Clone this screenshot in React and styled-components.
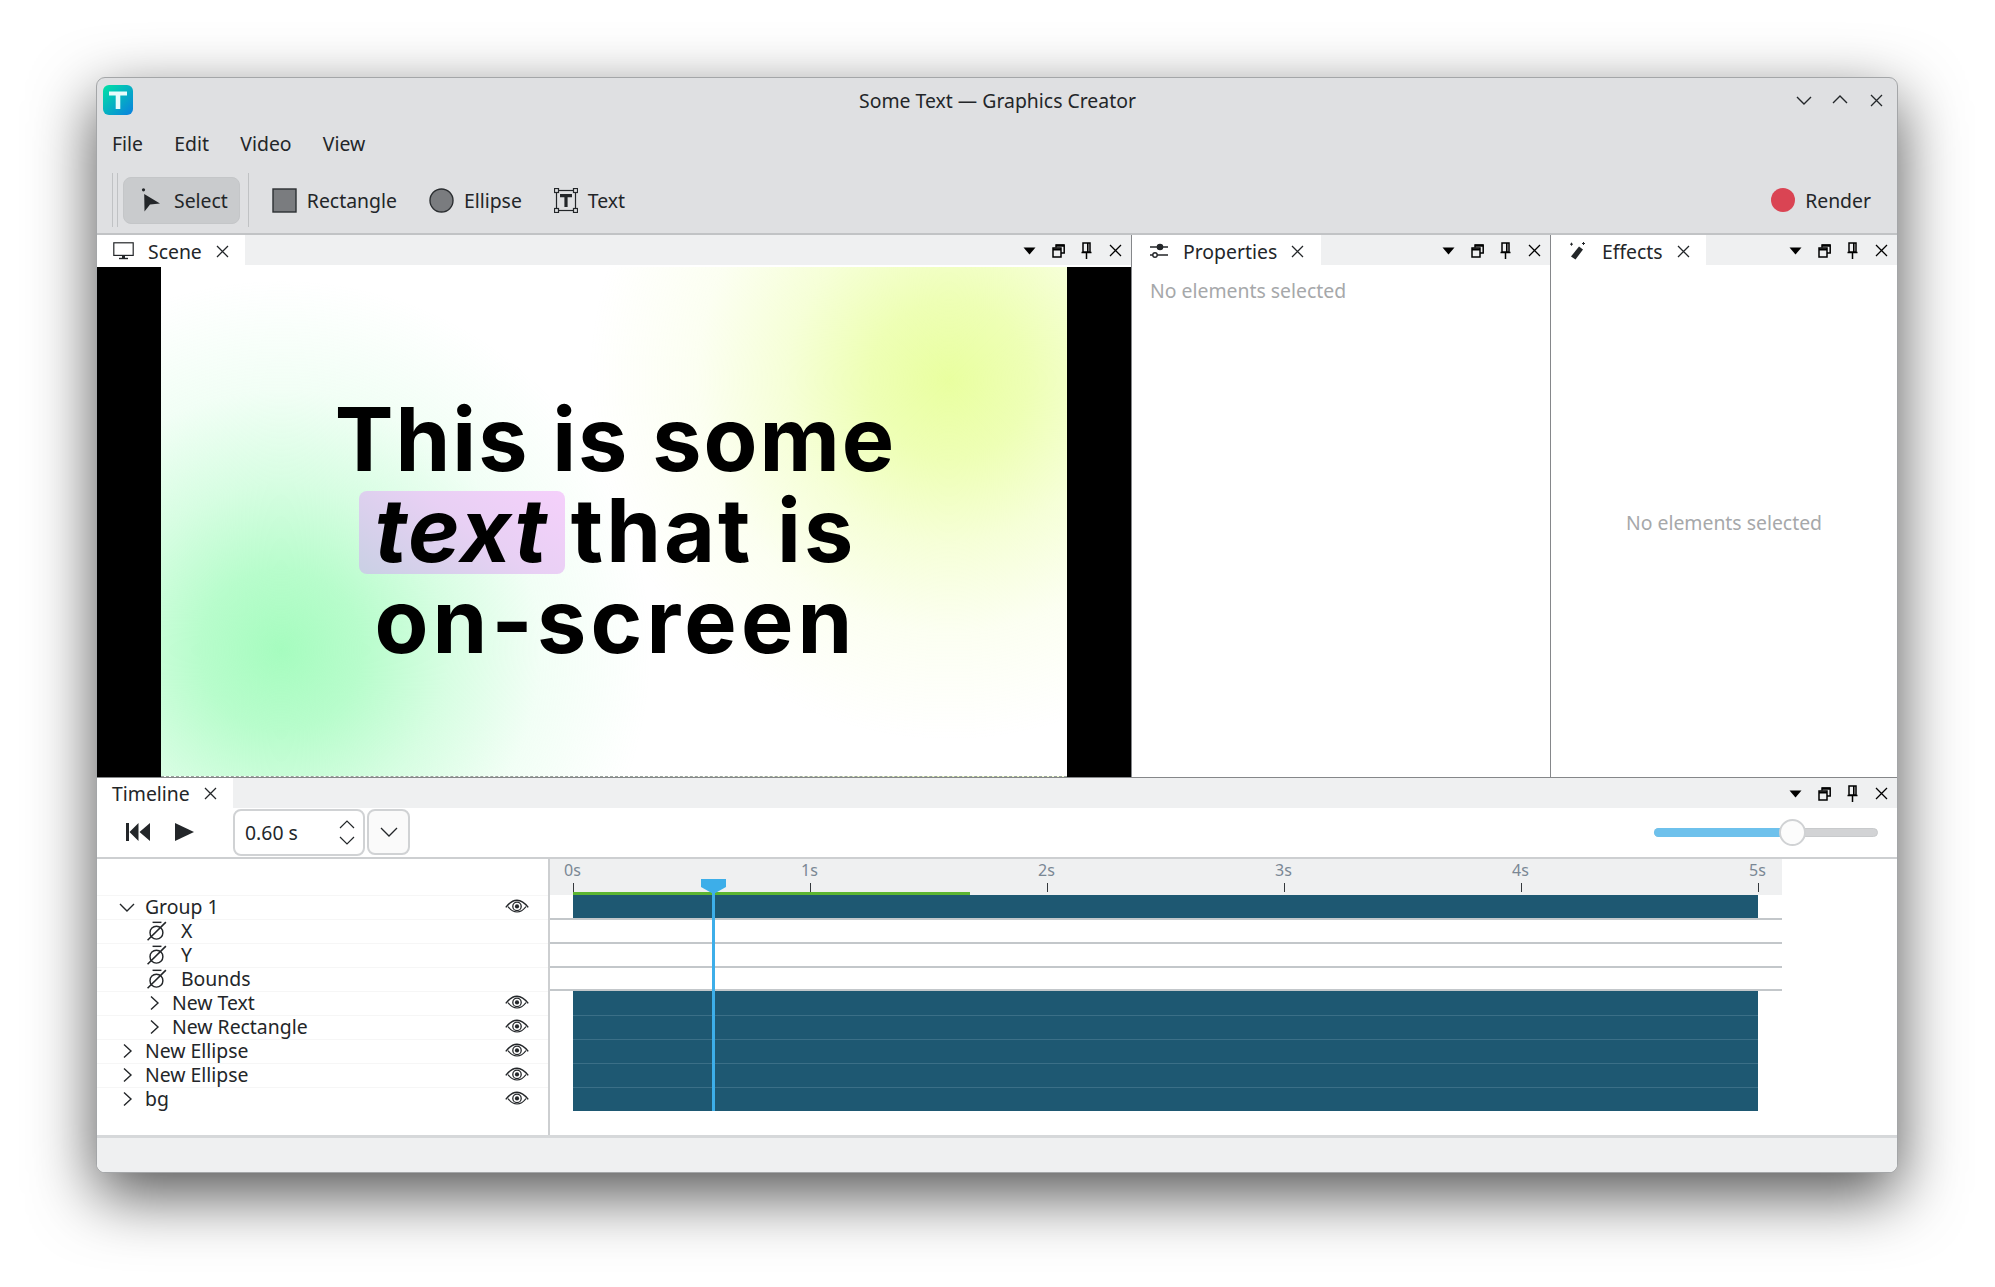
import React from "react";
import styled, { createGlobalStyle } from "styled-components";

const Global = createGlobalStyle`
  html, body { margin: 0; padding: 0; background: #fff; }
  body { width: 1995px; height: 1287px; overflow: hidden; font-family: "Noto Sans", sans-serif; color: #232629; }
  * { box-sizing: border-box; }
  svg { display: block; flex: none; }
`;

const Page = styled.div`
  padding: 77px 0 0 96px;
`;
const Win = styled.div`
  width: 1802px;
  height: 1096px;
  display: flex;
  flex-direction: column;
  border: 1px solid #a4a6a8;
  border-radius: 9px;
  overflow: hidden;
  background: #dfe0e2;
  box-shadow: 0 22px 64px rgba(0, 0, 0, 0.68);
`;
const TitleBar = styled.div`
  height: 44px;
  display: grid;
  grid-template-columns: 1fr auto 1fr;
  align-items: center;
  padding: 0 3px 0 6px;
  font-size: 19.4px;
`;
const TitleText = styled.span`
  padding: 1px 2px 0 0;
`;
const WinButtons = styled.div`
  display: flex;
  justify-content: flex-end;
`;
const WinButton = styled.div`
  width: 36px;
  height: 24px;
  display: flex;
  align-items: center;
  justify-content: center;
`;
const MenuBar = styled.div`
  height: 44px;
  display: flex;
  align-items: center;
  padding: 0 0 1px 15px;
  font-size: 19.4px;
  gap: 31.3px;
`;
const ToolBar = styled.div`
  height: 69px;
  display: flex;
  align-items: flex-start;
  padding: 7px 26px 0 15px;
  border-bottom: 2px solid #c1c3c5;
  font-size: 19.4px;
`;
const Handle = styled.div`
  width: 6px;
  height: 54px;
  border-left: 1px solid #c0c2c4;
  border-right: 1px solid #c0c2c4;
  margin-right: 5px;
`;
const Separator = styled.div`
  width: 1px;
  height: 54px;
  background: #c0c2c4;
  margin: 0 23px 0 8px;
`;
const SelectButton = styled.div`
  height: 47px;
  margin-top: 4px;
  display: flex;
  align-items: center;
  gap: 11px;
  padding: 0 11px 0 17px;
  background: #c9cbcd;
  border: 1px solid #c4c6c8;
  border-radius: 8px;
`;
const Tool = styled.div`
  height: 54px;
  display: flex;
  align-items: center;
  gap: 10px;
  margin-right: 32px;
  &:last-child { margin-right: 0; }
`;
const Spacer = styled.div`
  flex: 1;
`;
const Docks = styled.div`
  height: 543px;
  display: flex;
  background: #fff;
  border-bottom: 1px solid #858789;
`;
const Dock = styled.div`
  width: ${(p) => p.$width}px;
  display: flex;
  flex-direction: column;
  border-right: ${(p) => (p.$last ? "none" : "1px solid #85878a")};
`;
const TabBar = styled.div`
  height: 30px;
  flex: none;
  display: flex;
  background: #eff0f1;
`;
const Tab = styled.div`
  width: ${(p) => p.$width}px;
  display: flex;
  align-items: center;
  padding: ${(p) => p.$top ?? 2}px 0 0 ${(p) => p.$pad}px;
  background: #fff;
  font-size: 19.4px;
`;
const TabIcon = styled.div`
  width: ${(p) => p.$width}px;
`;
const TabClose = styled.div`
  margin-left: ${(p) => p.$gap}px;
`;
const DockTools = styled.div`
  margin-left: auto;
  display: flex;
  padding: 1px 1.5px 0 0;
`;
const DockTool = styled.div`
  width: 28.5px;
  display: flex;
  align-items: center;
  justify-content: center;
`;
const SceneBody = styled.div`
  margin-top: 2px;
  flex: 1;
  background: #000;
  display: flex;
  justify-content: center;
  padding-right: 1px;
`;
const Video = styled.div`
  width: 906px;
  height: 510px;
  background:
    radial-gradient(circle 360px at 788px 113px, #e9ffa0 0%, rgba(233, 255, 160, 0.78) 22%, rgba(233, 255, 160, 0.42) 45%, rgba(233, 255, 160, 0.14) 70%, rgba(233, 255, 160, 0) 100%),
    radial-gradient(circle 370px at 120px 383px, #a6fcbf 0%, rgba(166, 252, 191, 0.8) 22%, rgba(166, 252, 191, 0.45) 45%, rgba(166, 252, 191, 0.15) 70%, rgba(166, 252, 191, 0) 100%),
    #fff;
  border-bottom: 1px dashed #9aa39c;
  display: flex;
  flex-direction: column;
  align-items: center;
  padding: 127px 0 0 4px;
  font-family: Inter, sans-serif;
  font-weight: 700;
  font-size: 88px;
  line-height: 91px;
  color: #000;
`;
const HeroLine = styled.div`
  display: flex;
  align-items: center;
  height: 91px;
  white-space: pre;
  padding-right: ${(p) => p.$shift || 0}px;
  letter-spacing: ${(p) => p.$tracking}px;
`;
const Highlight = styled.span`
  width: 206px;
  height: 83px;
  margin: 4px 6px 0 0;
  padding-bottom: 4px;
  display: flex;
  align-items: center;
  justify-content: center;
  border-radius: 8px;
  font-style: italic;
  letter-spacing: 2px;
  background: linear-gradient(35deg, #c9d0e4 0%, #e8d0f4 55%, #f5d0fb 100%);
`;
const Empty = styled.div`
  color: #a6a8aa;
  font-size: 19.4px;
`;
const PropsBody = styled.div`
  padding: 12px 0 0 18px;
`;
const EffectsBody = styled.div`
  flex: 1;
  display: flex;
  justify-content: center;
  padding: 244px 0 0 0;
`;
const Timeline = styled.div`
  flex: 1;
  min-height: 0;
  display: flex;
  flex-direction: column;
  background: #fff;
`;
const Controls = styled.div`
  height: 51px;
  flex: none;
  display: flex;
  align-items: center;
  padding: 0 19px 1px 29px;
  border-bottom: 2px solid #cdcfd1;
`;
const Rewind = styled.div`
  margin-right: 25px;
`;
const Play = styled.div`
  margin-right: 39px;
`;
const Spin = styled.div`
  width: 132px;
  height: 47px;
  display: flex;
  align-items: center;
  justify-content: space-between;
  padding: 0 8px 0 10px;
  border: 2px solid #d0d2d4;
  border-radius: 8px;
  font-size: 19.4px;
`;
const SpinArrows = styled.div`
  display: flex;
  flex-direction: column;
  gap: 7px;
`;
const ComboButton = styled.div`
  width: 43px;
  height: 46px;
  margin-left: 2px;
  display: flex;
  align-items: center;
  justify-content: center;
  background: #fafafa;
  border: 2px solid #d0d2d4;
  border-radius: 8px;
`;
const Slider = styled.div`
  position: relative;
  margin-left: auto;
  width: 224px;
  height: 9px;
  background: #d2d3d5;
  border: 1px solid #c8cacc;
  border-radius: 5px;
`;
const SliderFill = styled.div`
  height: 9px;
  margin: -1px 0 0 -1px;
  background: #6ec1ec;
  border-radius: 5px 0 0 5px;
`;
const Thumb = styled.div`
  position: absolute;
  top: -10px;
  width: 27px;
  height: 27px;
  margin-left: -13px;
  background: #fcfcfc;
  border: 2px solid #d0d2d4;
  border-radius: 50%;
`;
const Split = styled.div`
  flex: 1;
  display: flex;
  min-height: 0;
`;
const Tree = styled.div`
  width: 451px;
  padding-top: 36px;
`;
const Row = styled.div`
  height: 24px;
  display: flex;
  align-items: center;
  padding: 0 19px 2px ${(p) => p.$pad}px;
  border-top: 1px solid #f6f6f6;
  font-size: 19.4px;
  line-height: 22px;
`;
const Slot = styled.div`
  width: 37px;
  display: flex;
  justify-content: center;
`;
const PropLabel = styled.span`
  margin-left: 6px;
`;
const Eye = styled.div`
  margin-left: auto;
`;
const Tracks = styled.div`
  position: relative;
  flex: 1;
  border-left: 2px solid #cdcfd1;
`;
const Ruler = styled.div`
  width: 1232px;
  height: 36px;
  display: flex;
  flex-direction: column;
  justify-content: flex-end;
  background: #eff0f1;
`;
const Ticks = styled.div`
  display: flex;
  gap: 236px;
  padding-left: 23px;
`;
const Tick = styled.div`
  width: 1px;
  display: flex;
  flex-direction: column;
  align-items: center;
`;
const TickLabel = styled.div`
  font-size: 16px;
  line-height: 20px;
  margin-left: -2px;
  color: #7a8794;
  white-space: nowrap;
`;
const TickMark = styled.div`
  width: 1px;
  height: 9px;
  margin-top: 3px;
  background: #33383c;
`;
const Cached = styled.div`
  width: 397px;
  height: 3px;
  margin-left: 23px;
  background: #5cb531;
`;
const Track = styled.div`
  width: 1232px;
  height: ${(p) => p.$height}px;
  padding-left: 23px;
  border-bottom: ${(p) => (p.$line ? "2px solid #c3c7ca" : "none")};
`;
const Bar = styled.div`
  width: 1185px;
  height: 100%;
  background: #1e5872;
  border-top: ${(p) => (p.$seam ? "1px solid #3b6f87" : "none")};
`;
const PlayHead = styled.div`
  position: absolute;
  left: 151px;
  top: 20px;
  width: 25px;
  height: 232px;
  display: flex;
  flex-direction: column;
  align-items: center;
`;
const PlayLine = styled.div`
  width: 3px;
  flex: 1;
  margin-top: -1px;
  background: #3daee9;
`;
const StatusBar = styled.div`
  height: 37px;
  flex: none;
  border-top: 3px solid #d6d8da;
  background: #eff0f1;
`;

const ink = "#232629";
const Chevron = ({ dir = "right", s = 18 }) => {
  const d = { right: "M6 2.5l7 6.5-7 6.5", down: "M2 6l7 7 7-7", up: "M2 12l7-7 7 7" }[dir];
  return (
    <svg width={s} height={s} viewBox="0 0 18 18" fill="none" stroke={ink} strokeWidth="1.4">
      <path d={d} />
    </svg>
  );
};
const Cross = ({ s = 13, c = ink }) => (
  <svg width={s} height={s} viewBox="0 0 13 13" fill="none" stroke={c} strokeWidth="1.3">
    <path d="M1 1l11 11M12 1L1 12" />
  </svg>
);
const AppIcon = () => (
  <svg width="30" height="30" viewBox="0 0 30 30">
    <defs>
      <linearGradient id="appg" x1="0" y1="0" x2="1" y2="1">
        <stop offset="0" stopColor="#00e3a4" />
        <stop offset="1" stopColor="#0a7fe0" />
      </linearGradient>
    </defs>
    <rect width="30" height="30" rx="6" fill="url(#appg)" />
    <path d="M6 6.5h18v4h-6.7V24h-4.6V10.5H6z" fill="#e8fbfb" />
  </svg>
);
const SelectIcon = () => (
  <svg width="22" height="26" viewBox="0 0 22 26" fill={ink}>
    <circle cx="2.5" cy="1.8" r="1.6" />
    <path d="M3.2 6L19 15.5l-10 1-5.5 7z" />
  </svg>
);
const RectIcon = () => (
  <svg width="25" height="25" viewBox="0 0 25 25">
    <rect x="1" y="1" width="23" height="23" fill="#7a7c7f" stroke="#2c2f32" strokeWidth="1.4" />
  </svg>
);
const EllipseIcon = () => (
  <svg width="25" height="25" viewBox="0 0 25 25">
    <circle cx="12.5" cy="12.5" r="11.5" fill="#7a7c7f" stroke="#2c2f32" strokeWidth="1.4" />
  </svg>
);
const TextIcon = () => (
  <svg width="24" height="25" viewBox="0 0 24 25">
    <rect x="2.5" y="2.5" width="19" height="20" fill="none" stroke={ink} strokeWidth="1.2" />
    {[[2.5, 2.5], [21.5, 2.5], [2.5, 22.5], [21.5, 22.5]].map(([x, y]) => (
      <rect key={`${x}${y}`} x={x - 2} y={y - 2} width="4" height="4" fill="#dfe0e2" stroke={ink} strokeWidth="1.2" />
    ))}
    <path d="M6 6h12v3.2h-4.4V19h-3.2V9.2H6z" fill={ink} />
  </svg>
);
const MonitorIcon = () => (
  <svg width="21" height="18" viewBox="0 0 21 18" fill="none" stroke={ink} strokeWidth="1.2">
    <rect x="0.8" y="0.8" width="19.4" height="12.6" />
    <path d="M6 16.5h9" strokeWidth="1.4" />
    <path d="M9 14h3v2H9z" fill={ink} stroke="none" />
  </svg>
);
const SlidersIcon = () => (
  <svg width="18" height="18" viewBox="0 0 18 18" fill="none" stroke={ink} strokeWidth="1.4">
    <path d="M0 5h18M0 13h3M7 13h11" />
    <circle cx="10" cy="5" r="2.6" fill={ink} />
    <circle cx="5" cy="13" r="2.2" fill="#fff" />
  </svg>
);
const WandIcon = () => (
  <svg width="18" height="20" viewBox="0 0 18 20" fill={ink}>
    <path d="M11 5.5l4 3-7.5 10-4.5-3z" />
    <path d="M2 3.2h3M3.5 1.7v3M15.5 1v3M14 2.5h3" stroke={ink} strokeWidth="1" fill="none" />
  </svg>
);
const MenuArrow = () => (
  <svg width="13" height="8" viewBox="0 0 13 8" fill="#000">
    <path d="M0.5 0.5h12L6.5 7.5z" />
  </svg>
);
const FloatIcon = () => (
  <svg width="13" height="14" viewBox="0 0 13 14" fill="none" stroke="#000" strokeWidth="1.5">
    <path d="M4 3.5V1h8.2v8H9" />
    <rect x="1" y="4" width="8" height="9" />
    <path d="M4 1.6h8M1 5.5h8" strokeWidth="2.2" />
  </svg>
);
const PinIcon = () => (
  <svg width="11" height="17" viewBox="0 0 11 17" fill="none" stroke="#000" strokeWidth="1.5">
    <path d="M2 1h7v9H2zM0.5 10.5h10M5.5 10.5V17" />
    <path d="M6.8 1v9" strokeWidth="1.6" />
  </svg>
);
const DockButtons = () => (
  <DockTools>
    <DockTool><MenuArrow /></DockTool>
    <DockTool><FloatIcon /></DockTool>
    <DockTool><PinIcon /></DockTool>
    <DockTool><Cross c="#000" /></DockTool>
  </DockTools>
);
const EyeIcon = () => (
  <svg width="24" height="16" viewBox="0 0 24 16" fill="none" stroke={ink}>
    <path d="M0.8 8.4C5 2.8 8.5 1.2 12 1.2s7 1.6 11.2 7.2" strokeWidth="1.5" />
    <path d="M3 7.6C6 11.5 9 13 12 13s6-1.5 9-5.4" strokeWidth="1.1" />
    <circle cx="12" cy="7.4" r="4.2" strokeWidth="1.3" />
    <circle cx="12" cy="7.4" r="2.1" fill={ink} stroke="none" />
  </svg>
);
const NoKeyIcon = () => (
  <svg width="20" height="20" viewBox="0 0 18 18" fill="none" stroke={ink} strokeWidth="1.3">
    <path d="M5 1.2h8" />
    <ellipse cx="8.5" cy="10.5" rx="5.8" ry="5.8" />
    <path d="M0.5 17.3L17 1" strokeWidth="1.4" />
  </svg>
);
const RewindIcon = () => (
  <svg width="24" height="18" viewBox="0 0 24 18" fill={ink}>
    <path d="M0 0h3v18H0zM12.5 0v18L3.5 9zM24 0v18l-10.5-9z" />
  </svg>
);
const PlayIcon = () => (
  <svg width="19" height="18" viewBox="0 0 19 18" fill={ink}>
    <path d="M0 0l19 9-19 9z" />
  </svg>
);
const HeadShape = () => (
  <svg width="25" height="15" viewBox="0 0 25 15" fill="#3daee9">
    <path d="M0 0h25v8l-12.5 7L0 8z" />
  </svg>
);

const items = [
  { kind: "group", pad: 11, open: true, label: "Group 1" },
  { kind: "prop", label: "X" },
  { kind: "prop", label: "Y" },
  { kind: "prop", label: "Bounds" },
  { kind: "group", pad: 38, label: "New Text" },
  { kind: "group", pad: 38, label: "New Rectangle" },
  { kind: "group", pad: 11, label: "New Ellipse" },
  { kind: "group", pad: 11, label: "New Ellipse" },
  { kind: "group", pad: 11, label: "bg" },
];

const tracks = [
  { height: 25, line: true, bar: true },
  { height: 24, line: true },
  { height: 24, line: true },
  { height: 23, line: true },
  { height: 24, bar: true },
  { height: 24, bar: true, seam: true },
  { height: 24, bar: true, seam: true },
  { height: 24, bar: true, seam: true },
  { height: 24, bar: true, seam: true },
];

export default function App() {
  return (
    <Page>
      <Global />
      <Win>
        <TitleBar>
          <AppIcon />
          <TitleText>Some Text — Graphics Creator</TitleText>
          <WinButtons>
            <WinButton><Chevron dir="down" /></WinButton>
            <WinButton><Chevron dir="up" /></WinButton>
            <WinButton><Cross c={ink} /></WinButton>
          </WinButtons>
        </TitleBar>
        <MenuBar>
          <span>File</span>
          <span>Edit</span>
          <span>Video</span>
          <span>View</span>
        </MenuBar>
        <ToolBar>
          <Handle />
          <SelectButton><SelectIcon />Select</SelectButton>
          <Separator />
          <Tool><RectIcon />Rectangle</Tool>
          <Tool><EllipseIcon />Ellipse</Tool>
          <Tool><TextIcon />Text</Tool>
          <Spacer />
          <Tool>
            <svg width="24" height="24" viewBox="0 0 24 24"><circle cx="12" cy="12" r="12" fill="#da4453" /></svg>
            Render
          </Tool>
        </ToolBar>
        <Docks>
          <Dock $width={1035}>
            <TabBar>
              <Tab $width={148} $pad={16}>
                <TabIcon $width={35}><MonitorIcon /></TabIcon>
                Scene
                <TabClose $gap={14}><Cross /></TabClose>
              </Tab>
              <DockButtons />
            </TabBar>
            <SceneBody>
              <Video>
                <HeroLine $tracking={2}>This is some</HeroLine>
                <HeroLine $shift={16} $tracking={3}><Highlight>text</Highlight>that is</HeroLine>
                <HeroLine $tracking={4.2}>on-screen</HeroLine>
              </Video>
            </SceneBody>
          </Dock>
          <Dock $width={419}>
            <TabBar>
              <Tab $width={189} $pad={18}>
                <TabIcon $width={33}><SlidersIcon /></TabIcon>
                Properties
                <TabClose $gap={14}><Cross /></TabClose>
              </Tab>
              <DockButtons />
            </TabBar>
            <PropsBody><Empty>No elements selected</Empty></PropsBody>
          </Dock>
          <Dock $width={346} $last>
            <TabBar>
              <Tab $width={155} $pad={17}>
                <TabIcon $width={34}><WandIcon /></TabIcon>
                Effects
                <TabClose $gap={14}><Cross /></TabClose>
              </Tab>
              <DockButtons />
            </TabBar>
            <EffectsBody><Empty>No elements selected</Empty></EffectsBody>
          </Dock>
        </Docks>
        <Timeline>
          <TabBar>
            <Tab $width={136} $pad={15} $top={0}>
              Timeline
              <TabClose $gap={14}><Cross /></TabClose>
            </Tab>
            <DockButtons />
          </TabBar>
          <Controls>
            <Rewind><RewindIcon /></Rewind>
            <Play><PlayIcon /></Play>
            <Spin>
              0.60 s
              <SpinArrows>
                <svg width="16" height="9" viewBox="0 0 16 9" fill="none" stroke={ink} strokeWidth="1.2"><path d="M1 8l7-7 7 7" /></svg>
                <svg width="16" height="9" viewBox="0 0 16 9" fill="none" stroke={ink} strokeWidth="1.2"><path d="M1 1l7 7 7-7" /></svg>
              </SpinArrows>
            </Spin>
            <ComboButton>
              <svg width="18" height="10" viewBox="0 0 18 10" fill="none" stroke={ink} strokeWidth="1.3"><path d="M1 1l8 8 8-8" /></svg>
            </ComboButton>
            <Slider>
              <SliderFill style={{ width: "61.6%" }} />
              <Thumb style={{ left: "61.6%" }} />
            </Slider>
          </Controls>
          <Split>
            <Tree>
              {items.map((it, i) =>
                it.kind === "prop" ? (
                  <Row key={i} $pad={41}>
                    <Slot><NoKeyIcon /></Slot>
                    <PropLabel>{it.label}</PropLabel>
                  </Row>
                ) : (
                  <Row key={i} $pad={it.pad}>
                    <Slot><Chevron dir={it.open ? "down" : "right"} /></Slot>
                    {it.label}
                    <Eye><EyeIcon /></Eye>
                  </Row>
                )
              )}
            </Tree>
            <Tracks>
              <Ruler>
                <Ticks>
                  {["0s", "1s", "2s", "3s", "4s", "5s"].map((t) => (
                    <Tick key={t}>
                      <TickLabel>{t}</TickLabel>
                      <TickMark />
                    </Tick>
                  ))}
                </Ticks>
                <Cached />
              </Ruler>
              {tracks.map((t, i) => (
                <Track key={i} $height={t.height} $line={t.line}>
                  {t.bar && <Bar $seam={t.seam} />}
                </Track>
              ))}
              <PlayHead>
                <HeadShape />
                <PlayLine />
              </PlayHead>
            </Tracks>
          </Split>
          <StatusBar />
        </Timeline>
      </Win>
    </Page>
  );
}
